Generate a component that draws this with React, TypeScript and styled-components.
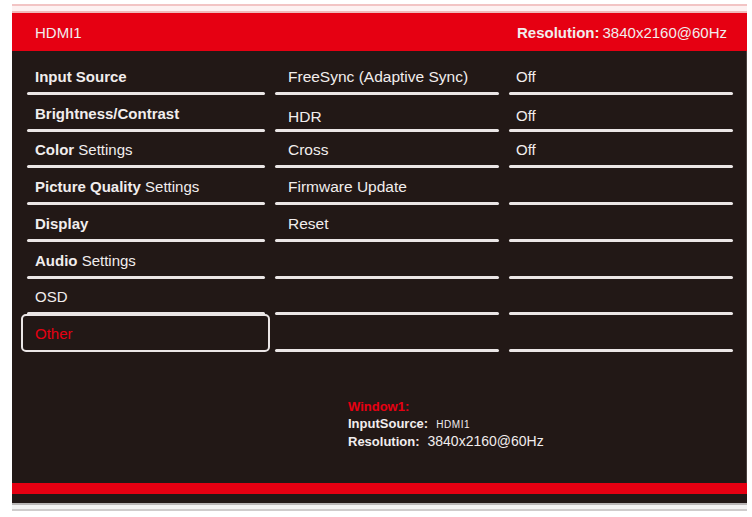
import React, { FC } from 'react';
import styled, { createGlobalStyle } from 'styled-components';

const red = '#e60012';
const dark = '#221816';
const ink = '#f1eded';
const rowHeight = '36.75px';

const GlobalStyle = createGlobalStyle`
  html, body {
    margin: 0;
    padding: 0;
    background: #fff;
  }
  body {
    font-family: "Liberation Sans", Arial, Helvetica, sans-serif;
  }
`;

const Frame = styled.div`
  width: 735px;
  margin-left: 12px;
  padding-top: 4px;
  display: flex;
  flex-direction: column;
`;

const TopTrim = styled.div`
  height: 5px;
  border-top: 2px solid #f2c4c4;
  border-bottom: 2px solid #f0baba;
  background: #fdf1f1;
`;

const Header = styled.div`
  height: 38px;
  background: ${red};
  color: ${ink};
  display: flex;
  align-items: center;
  justify-content: space-between;
  padding: 0 20px 0 23px;
  font-size: 15px;
`;

const Bold = styled.span`
  font-weight: 700;
`;

const Resolution = styled.div`
  display: flex;
  gap: 3px;
`;

const Body = styled.div`
  height: 432px;
  background: ${dark};
  padding: 7px 0 0 15px;
  box-sizing: border-box;
  border-right: 1px solid #4a403e;
`;

const Columns = styled.div`
  display: grid;
  grid-template-columns: 238px 224px 224px;
  column-gap: 10px;
`;

const Column = styled.div<{ $size: number }>`
  display: flex;
  flex-direction: column;
  font-size: ${(p) => p.$size}px;
`;

const Cell = styled.div<{ $pad: number; $lined?: boolean; $active?: boolean; $drop?: number }>`
  position: relative;
  height: ${rowHeight};
  box-sizing: border-box;
  display: flex;
  align-items: flex-end;
  padding: 0 0 ${(p) => 9 - (p.$drop ?? 0)}px ${(p) => p.$pad}px;
  line-height: 18px;
  color: ${(p) => (p.$active ? red : ink)};
  white-space: nowrap;

  ${(p) =>
    p.$lined &&
    `
    &::after {
      content: '';
      position: absolute;
      left: 0;
      right: 0;
      bottom: 0;
      height: 3px;
      border-radius: 2px;
      background: #ebe6e6;
    }
  `}
`;

const ActiveBox = styled.div`
  position: absolute;
  left: -6px;
  right: -5px;
  top: -1px;
  bottom: 0;
  border: 2px solid #ebe6e6;
  border-radius: 5px;
`;

const Info = styled.div`
  margin: 46px 0 0 321px;
  display: flex;
  flex-direction: column;
  font-size: 13px;
  line-height: 17px;
  color: ${ink};
`;

const InfoTitle = styled.div`
  color: ${red};
  font-weight: 700;
`;

const InfoRow = styled.div`
  display: flex;
  align-items: baseline;
  gap: 8px;
`;

const InfoLabel = styled.span`
  font-weight: 700;
`;

const SmallValue = styled.span`
  font-size: 10px;
  letter-spacing: 0.6px;
`;

const BigValue = styled.span`
  font-size: 14px;
`;

const RedStripe = styled.div`
  height: 11px;
  background: ${red};
`;

const DarkBand = styled.div`
  height: 9px;
  background: ${dark};
`;

const BottomTrim = styled.div`
  height: 4px;
  border-top: 2px solid #b9b6b6;
  border-bottom: 2px solid #cfcccc;
  background: #f3f3f3;
`;

type Label = { bold?: string; rest?: string };

const menu: Label[] = [
  { bold: 'Input Source' },
  { bold: 'Brightness/Contrast' },
  { bold: 'Color', rest: ' Settings' },
  { bold: 'Picture Quality', rest: ' Settings' },
  { bold: 'Display' },
  { bold: 'Audio', rest: ' Settings' },
  { rest: 'OSD' },
];

const options = ['FreeSync (Adaptive Sync)', 'HDR', 'Cross', 'Firmware Update', 'Reset', '', '', ''];
const values = ['Off', 'Off', 'Off', '', '', '', '', ''];

const App: FC = () => (
  <>
    <GlobalStyle />
    <Frame>
      <TopTrim />
      <Header>
        <span>HDMI1</span>
        <Resolution>
          <Bold>Resolution:</Bold>
          <span>3840x2160@60Hz</span>
        </Resolution>
      </Header>
      <Body>
        <Columns>
          <Column $size={15}>
            {menu.map((m, i) => (
              <Cell key={i} $pad={8} $lined>
                <span>
                  {m.bold && <Bold>{m.bold}</Bold>}
                  {m.rest}
                </span>
              </Cell>
            ))}
            <Cell $pad={8} $active>
              <ActiveBox />
              <span>Other</span>
            </Cell>
          </Column>
          <Column $size={15.5}>
            {options.map((o, i) => (
              <Cell key={i} $pad={13} $lined $drop={i === 1 ? 3 : 0}>
                {o}
              </Cell>
            ))}
          </Column>
          <Column $size={15}>
            {values.map((v, i) => (
              <Cell key={i} $pad={7} $lined $drop={i === 1 ? 2 : 0}>
                {v}
              </Cell>
            ))}
          </Column>
        </Columns>
        <Info>
          <InfoTitle>Window1:</InfoTitle>
          <InfoRow>
            <InfoLabel>InputSource:</InfoLabel>
            <SmallValue>HDMI1</SmallValue>
          </InfoRow>
          <InfoRow>
            <InfoLabel>Resolution:</InfoLabel>
            <BigValue>3840x2160@60Hz</BigValue>
          </InfoRow>
        </Info>
      </Body>
      <RedStripe />
      <DarkBand />
      <BottomTrim />
    </Frame>
  </>
);

export default App;
